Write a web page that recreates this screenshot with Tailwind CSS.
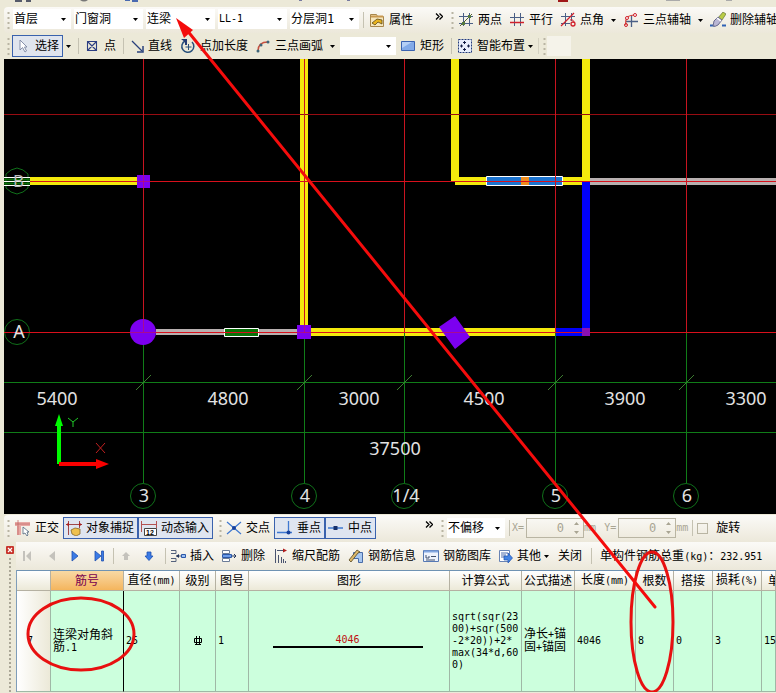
<!DOCTYPE html>
<html lang="zh-CN">
<head>
  <meta charset="UTF-8">
  <meta name="viewport" content="width=device-width, initial-scale=1.0">
  <title>连梁 - 钢筋编辑</title>
  <script src="https://cdn.jsdelivr.net/npm/@tailwindcss/browser@4"></script>
</head>
<body class="relative overflow-hidden bg-[#ece9d8] font-['DejaVu_Sans_Mono','Noto_Sans_CJK_SC',monospace] text-xs leading-3 text-black">

  <!-- Shared glyphs -->
  <svg class="hidden">
    <symbol id="caret" viewBox="0 0 7 5"><path d="M1 1h5L3.500 4z" fill="#000"/></symbol>
    <symbol id="grip" viewBox="0 0 3 18"><path d="M1.500 1v17" stroke="#b9b5a3" stroke-width="2" stroke-dasharray="2 3"/></symbol>
    <symbol id="more" viewBox="0 0 8 7"><path d="M1 .5l3 3-3 3M4.500 .5l3 3-3 3" fill="none" stroke="#000" stroke-width="1.300"/></symbol>
  </svg>

  <header>
    <svg class="block h-[7px] w-[776px]" viewBox="0 0 776 7">
      <path d="M15 0h7v2h-7zM26 0h5v2h-5z" fill="#555a6a"/><path d="M80 0q4 3 8 0z" fill="#777"/>
      <path d="M125 0h5v1h-5zM132 0h6v2h-6z" fill="#4a6ab0"/><path d="M299 0h3v1h-3zM347 0h3v1h-3z" fill="#777aa0"/>
      <path d="M558 0h10v2h-10z" fill="#a01818"/><path d="M666 0h14v1h-14zM726 0h6v1h-6z" fill="#aaa"/>
    </svg>

    <!-- Floor / component toolbar -->
    <div class="ml-1 flex h-[26px] items-center overflow-hidden rounded-l bg-linear-to-b from-[#fbfaf7] to-[#ece8da] pl-[3px] whitespace-nowrap *:shrink-0">
      <svg class="h-[18px] w-[3px]"><use href="#grip"/></svg>
      <div class="ml-[3px] flex gap-[3px] pb-[2px]">
        <label class="flex h-5 w-[58px] items-center bg-white pr-1"><select aria-label="楼层" class="h-5 min-w-0 flex-1 appearance-none pl-px leading-5 outline-none"><option>首层</option></select><svg class="h-[5px] w-[7px]"><use href="#caret"/></svg></label>
        <label class="flex h-5 w-[69px] items-center bg-white pr-1"><select aria-label="构件类别" class="h-5 min-w-0 flex-1 appearance-none pl-px leading-5 outline-none"><option>门窗洞</option></select><svg class="h-[5px] w-[7px]"><use href="#caret"/></svg></label>
        <label class="flex h-5 w-[69px] items-center bg-white pr-1"><select aria-label="构件类型" class="h-5 min-w-0 flex-1 appearance-none pl-px leading-5 outline-none"><option>连梁</option></select><svg class="h-[5px] w-[7px]"><use href="#caret"/></svg></label>
        <label class="flex h-5 w-[69px] items-center bg-white pr-1"><select aria-label="构件" class="h-5 min-w-0 flex-1 appearance-none pl-px text-[10px] leading-5 outline-none"><option>LL-1</option></select><svg class="h-[5px] w-[7px]"><use href="#caret"/></svg></label>
        <label class="flex h-5 w-[69px] items-center bg-white pr-1"><select aria-label="分层" class="h-5 min-w-0 flex-1 appearance-none pl-px leading-5 outline-none"><option>分层洞1</option></select><svg class="h-[5px] w-[7px]"><use href="#caret"/></svg></label>
      </div>
      <span class="ml-1 h-4 w-px bg-[#c5c2b2]"></span>
      <button class="ml-[5px] flex items-center gap-1">
        <svg class="size-4" viewBox="0 0 16 16"><path d="M1.500 2.500h6l1 2h6v10h-13z" fill="#f6e7bd" stroke="#a8874c"/><path d="M2 4.500h12" stroke="#c89850" stroke-width="2"/><path d="M3 11l5-4 5 1v4l-4-2-3 3z" fill="#e9b41e" stroke="#5c4818" stroke-width=".8"/></svg>属性
      </button>
      <button aria-label="更多" class="mb-2 ml-[22px]"><svg class="h-[7px] w-2"><use href="#more"/></svg></button>
      <svg class="ml-2 h-[18px] w-[3px]"><use href="#grip"/></svg>
      <button class="ml-1 flex items-center gap-1">
        <svg class="size-4" viewBox="0 0 16 16"><path d="M5.500 1v13M11.500 1v13M1 4.500h14M1 11.500h14" stroke="#4a5f86"/><path d="M2 14L14 2" stroke="#555f30"/><path d="M4 10h3v3H4zM10 3h3v3h-3z" fill="#567a3c"/></svg>两点
      </button>
      <button class="ml-[7px] flex items-center gap-1">
        <svg class="size-4" viewBox="0 0 16 16"><path d="M5.500 1v13M11.500 1v13" stroke="#4a5f86"/><path d="M1 5.500h14" stroke="#4a5f86"/><path d="M1 10.500h14" stroke="#d0202c" stroke-width="1.500"/></svg>平行
      </button>
      <button class="ml-[7px] flex items-center gap-1">
        <svg class="size-4" viewBox="0 0 16 16"><path d="M5.500 1v13M11.500 1v8M1 4.500h14M1 11.500h9" stroke="#4a5f86"/><path d="M1 14L14 1" stroke="#d0202c" stroke-width="1.300"/><path d="M10 8q4-1 4 3" fill="none" stroke="#d0202c"/><circle cx="13" cy="12" r="2" fill="none" stroke="#d0202c" stroke-width="1.300"/></svg>点角
      </button>
      <button aria-label="点角选项" class="ml-[6px]"><svg class="h-[5px] w-[7px]"><use href="#caret"/></svg></button>
      <button class="ml-[6px] flex items-center gap-1">
        <svg class="size-4" viewBox="0 0 16 16"><path d="M8.500 3v12M3 9.500h12" stroke="#4a5f86" stroke-width="1.300"/><path d="M3 13Q1 3 12 3" fill="none" stroke="#d94338" stroke-width="1.200"/><circle cx="3" cy="13" r="1.500" fill="none" stroke="#d0202c"/><circle cx="4" cy="6" r="1.500" fill="#fff" stroke="#d0202c"/><circle cx="12" cy="3" r="1.500" fill="#fff" stroke="#d0202c"/></svg>三点辅轴
      </button>
      <button aria-label="三点辅轴选项" class="ml-[6px]"><svg class="h-[5px] w-[7px]"><use href="#caret"/></svg></button>
      <button class="ml-[6px] flex items-center gap-1">
        <svg class="size-4" viewBox="0 0 16 16"><path d="M0 13.500h5M12 13.500h4" stroke="#2f62b5" stroke-width="2"/><path d="M8 6l5-6 3 2-4 6z" fill="#b9cc45" stroke="#63713a" stroke-width=".7"/><path d="M4 9l4-4 4 3-4 5q-3 2-5 1z" fill="#b9b6d4" stroke="#6a6a8c"/><path d="M7 6l4 3" stroke="#fff" stroke-width="1.500"/></svg>删除辅轴
      </button>
    </div>

    <!-- Drawing toolbar -->
    <div class="ml-1 flex h-[26px] items-center overflow-hidden pl-[3px] whitespace-nowrap *:shrink-0">
      <svg class="h-[18px] w-[3px]"><use href="#grip"/></svg>
      <button class="ml-[2px] flex h-[22px] w-[51px] items-center gap-1 border border-[#3a62ad] bg-[#e0e5ee] pl-[2px]">
        <svg class="size-4" viewBox="0 0 16 16"><path d="M5 2v10l2.500-2.500L10 14l1.500-1-2-4H12z" fill="#fff" stroke="#7a86a2" stroke-width=".9"/></svg>选择
      </button>
      <button aria-label="选择选项" class="ml-[2px]"><svg class="h-[5px] w-[7px]"><use href="#caret"/></svg></button>
      <span class="ml-[6px] h-4 w-px bg-[#c5c2b2]"></span>
      <button class="ml-[5px] flex items-center gap-1">
        <svg class="size-4" viewBox="0 0 16 16"><path d="M3.500 3.500h9v9h-9zM4 4l8 8M12 4l-8 8" fill="none" stroke="#2b3d82" stroke-width="1.100"/></svg>点
      </button>
      <span class="ml-[7px] h-4 w-px bg-[#c5c2b2]"></span>
      <button class="ml-1 flex items-center gap-1">
        <svg class="size-4" viewBox="0 0 16 16"><path d="M4 3l10 10" stroke="#28407c" stroke-width="1.300"/><path d="M15 8v6H9" fill="none" stroke="#28407c" stroke-width="1.500"/></svg>直线
      </button>
      <button class="ml-2 flex items-center gap-1">
        <svg class="size-4" viewBox="0 0 16 16"><path d="M5 3a6 6 0 1 0 7 1" fill="none" stroke="#28507c" stroke-width="1.500"/><path d="M1 1h6v6H5V4z" fill="#243c74"/><path d="M8.500 6v6M5.500 9h6" stroke="#28507c"/></svg>点加长度
      </button>
      <button class="ml-[7px] flex items-center gap-1">
        <svg class="size-4" viewBox="0 0 16 16"><path d="M3 13Q3 4 13 4" fill="none" stroke="#c8503e" stroke-width="1.400"/><circle cx="3" cy="13" r="1.500" fill="#3f6578"/><circle cx="6" cy="7" r="1.500" fill="#3f6578"/><circle cx="13" cy="4" r="1.500" fill="#3f6578"/></svg>三点画弧
      </button>
      <button aria-label="三点画弧选项" class="ml-[6px]"><svg class="h-[5px] w-[7px]"><use href="#caret"/></svg></button>
      <label class="ml-1 flex h-[18px] w-[56px] items-center bg-white pr-1"><select aria-label="画弧方式" class="min-w-0 flex-1 appearance-none outline-none"><option></option></select><svg class="h-[5px] w-[7px]"><use href="#caret"/></svg></label>
      <button class="ml-1 flex items-center gap-1">
        <svg class="size-4" viewBox="0 0 16 16"><path d="M1.500 3.500h13v9h-13z" fill="#82aae8" stroke="#3a62b0"/><path d="M2 4h10L2 10z" fill="#b4cff6"/></svg>矩形
      </button>
      <span class="ml-[7px] h-4 w-px bg-[#c5c2b2]"></span>
      <button class="ml-[5px] flex items-center gap-1">
        <svg class="size-4" viewBox="0 0 16 16"><path d="M1.500 1.500h13v13h-13z" fill="#e8eefc" stroke="#223a7c" stroke-dasharray="2 1"/><path d="M7.500 3v3M6 4.500h3M7.500 10v3M6 11.500h3M3 8h3M4.500 6.500v3M10 8h3M11.500 6.500v3" stroke="#111c44"/></svg>智能布置
      </button>
      <button aria-label="智能布置选项" class="ml-[2px]"><svg class="h-[5px] w-[7px]"><use href="#caret"/></svg></button>
      <span class="ml-1 h-4 w-px bg-[#d5d2c2]"></span>
      <svg class="ml-1 h-[18px] w-[3px]"><use href="#grip"/></svg>
      <span class="ml-px h-5 w-6 bg-[#f5f3ea]"></span>
    </div>
  </header>

  <!-- Drawing area -->
  <main class="ml-1 bg-black">
    <svg class="block w-full" viewBox="4 59 772 455" font-family="Noto Sans, sans-serif" font-size="18">
      <!-- walls -->
      <g fill="#f4ea0c">
        <path d="M300 59h8v270h-8zM451 59h8v122h-8zM582 59h8v122h-8z"/>
        <path d="M30 177h108v8H30zM455 177h131v8H455zM308 328h248v8H308z"/>
      </g>
      <path d="M590 178h186v7H590zM156 329h142v6H156z" fill="#b8b0b0"/>
      <path d="M582 182h8v153h-8zM555 328h28v8h-28z" fill="#0000fa"/>
      <!-- openings -->
      <path d="M486.500 176.500h76v9h-76z" fill="#1c74d0" stroke="#fff"/>
      <path d="M521 177h8v8h-8z" fill="#ee8c1c"/>
      <path d="M224.500 328.500h34v8h-34z" fill="#087008" stroke="#fff"/>
      <!-- axis bubbles -->
      <g fill="none" stroke="#10701a">
        <path d="M17 168l6 2 5 4v14l-5 4-6 2-6-2-5-4v-14l5-4z"/>
        <circle cx="17" cy="332" r="12.500"/>
        <circle cx="143" cy="496" r="12.500"/><circle cx="304" cy="496" r="12.500"/><circle cx="404" cy="496" r="12.500"/><circle cx="555" cy="496" r="12.500"/><circle cx="686" cy="496" r="12.500"/>
      </g>
      <path d="M4 179.500h26M4 183.500h26" stroke="#087008" stroke-width="2"/>
      <path d="M4 177.500h26M4 181.500h26M4 185.500h26" stroke="#fff"/>
      <text x="13" y="187" fill="#bbb" font-size="17">B</text>
      <!-- axes -->
      <path d="M4 114.500h772" stroke="#980c12"/>
      <path d="M143.500 59v273M304.500 59v273M404.500 59v273M555.500 59v273M686.500 59v273" stroke="#c81420"/>
      <path d="M4 382.500h772M4 432.500h772M143.500 332v151M304.500 332v151M404.500 332v151M555.500 332v151M686.500 332v151" stroke="#107c18"/>
      <path d="M136 390l15-15M297 390l15-15M397 390l15-15M548 390l15-15M679 390l15-15" stroke="#3c7c30"/>
      <path d="M30 181.500h746M4 332.500h772" stroke="#d8101c"/>
      <!-- columns -->
      <g fill="#7c00f0">
        <path d="M137 175h13v13h-13zM297 325h14v14h-14zM455 316l15 21-15 12-16-22z"/>
        <circle cx="143" cy="332" r="13"/>
        <path d="M582 328h8v8h-8z" fill="#8c10b4"/>
      </g>
      <path d="M137 181.500h13M143.500 175v13M130 332.500h26M143.500 319v13M297 332.500h14M304.500 325v8M439 332.500h31" stroke="#c81450" stroke-opacity=".6"/>
      <!-- dimensions -->
      <g fill="#e2e2e2" text-anchor="middle">
        <text x="57" y="405">5400</text><text x="228" y="405">4800</text><text x="359" y="405">3000</text>
        <text x="484" y="405">4500</text><text x="625" y="405">3900</text><text x="746" y="405">3300</text>
        <text x="395" y="455">37500</text>
        <text x="144" y="502">3</text><text x="305" y="502">4</text><text x="406" y="502">1/4</text><text x="556" y="502">5</text><text x="687" y="502">6</text>
        <text x="19" y="338">A</text>
      </g>
      <!-- UCS -->
      <path d="M57 464v-38h-2l4-12 4 12h-2v38z" fill="#00fa00"/>
      <path d="M59 462h37v-3l13 5-13 5v-3H59z" fill="#fa0000"/>
      <path d="M68 418l5 4 5-4M73 422v5" fill="none" stroke="#20c828"/>
      <path d="M96 443l9 10M105 443l-9 10" stroke="#c02020"/>
    </svg>
  </main>

  <!-- Snap toolbar -->
  <div class="mt-px ml-1 flex h-[27px] items-center overflow-hidden rounded-l bg-linear-to-b from-[#fbfaf7] to-[#ece8da] pb-px pl-[3px] whitespace-nowrap *:shrink-0">
    <svg class="h-[18px] w-[3px]"><use href="#grip"/></svg>
    <button class="ml-[5px] flex items-center gap-1">
      <svg class="size-4" viewBox="0 0 16 16"><path d="M0 2h15v4H6v9H2V6H0z" fill="#e8a9a4"/><path d="M3 0v15M0 4h15" stroke="#c06868" stroke-width=".8"/><path d="M8 7v7l2-1 2 3 1-1-1-3h2z" fill="#fff" stroke="#51677d" stroke-width=".8"/></svg>正交
    </button>
    <button class="ml-1 flex h-[22px] w-[75px] items-center gap-1 border border-[#3a62ad] bg-[#dfe5f0] pl-[2px]">
      <svg class="size-4" viewBox="0 0 16 16"><path d="M2.500 1v14M13.500 1v7M0 4.500h16" stroke="#a04848"/><path d="M0 4.500l3-2v4zM16 4.500l-3-2v4z" fill="#a82020"/><path d="M5 10l4-2 5 1v5l-4 2-4-2z" fill="#efc14e" stroke="#86682a" stroke-width=".8"/></svg>对象捕捉
    </button>
    <button class="flex h-[22px] w-[75px] items-center gap-1 border border-[#3a62ad] bg-[#dfe5f0] pl-[2px]">
      <svg class="size-4" viewBox="0 0 16 16"><path d="M.5 1v11M15.500 1v7M1 4.500h14" fill="none" stroke="#b45252"/><path d="M3.500 8.500h12v7h-12z" fill="#fff" stroke="#444"/><text x="5" y="14.500" font-family="Liberation Sans, sans-serif" font-size="7" font-weight="bold">12</text></svg>动态输入
    </button>
    <svg class="ml-[6px] h-[18px] w-[3px]"><use href="#grip"/></svg>
    <button class="ml-1 flex items-center gap-1">
      <svg class="size-4" viewBox="0 0 16 16"><path d="M1 2l14 12M15 2L1 14" stroke="#3f78d0" stroke-width="1.200"/><circle cx="8" cy="8" r="2" fill="#16409c"/></svg>交点
    </button>
    <button class="ml-1 flex h-[22px] w-[51px] items-center gap-1 border border-[#3a62ad] bg-[#dfe5f0] pl-[2px]">
      <svg class="size-4" viewBox="0 0 16 16"><path d="M11.500 1v12M0 12.500h15" stroke="#3f78d0" stroke-width="1.300"/><circle cx="11.500" cy="12.500" r="2" fill="#16409c"/></svg>垂点
    </button>
    <button class="flex h-[22px] w-[51px] items-center gap-1 border border-[#3a62ad] bg-[#dfe5f0] pl-[2px]">
      <svg class="size-4" viewBox="0 0 16 16"><path d="M0 8h15" stroke="#3f78d0" stroke-width="1.300"/><path d="M5.500 6h4v4h-4z" fill="#16306c"/></svg>中点
    </button>
    <button aria-label="更多" class="mb-2 ml-[49px]"><svg class="h-[7px] w-2"><use href="#more"/></svg></button>
    <svg class="ml-2 h-[18px] w-[3px]"><use href="#grip"/></svg>
    <label class="ml-[3px] flex h-5 w-[58px] items-center bg-white pr-1"><select aria-label="偏移" class="h-5 min-w-0 flex-1 appearance-none pl-px leading-5 outline-none"><option>不偏移</option></select><svg class="h-[5px] w-[7px]"><use href="#caret"/></svg></label>
    <span class="ml-1 h-4 w-px bg-[#c5c2b2]"></span>
    <label for="dx" class="ml-[2px] text-[10px] text-[#a9a593]">X=</label>
    <span class="ml-[2px] flex h-5 w-[58px] items-center border border-[#b9b5a3] pr-1">
      <input id="dx" type="text" value="0" disabled class="min-w-0 flex-1 pr-[10px] text-right text-[#a9a593]">
      <svg class="h-3 w-[5px]" viewBox="0 0 5 12"><path d="M0 3h5L2.500 0zM0 9h5l-2.500 3z" fill="#a9a593"/></svg>
    </span>
    <span class="text-[10px] text-[#a9a593]">mm</span>
    <label for="dy" class="ml-2 text-[10px] text-[#a9a593]">Y=</label>
    <span class="ml-[2px] flex h-5 w-[58px] items-center border border-[#b9b5a3] pr-1">
      <input id="dy" type="text" value="0" disabled class="min-w-0 flex-1 pr-[10px] text-right text-[#a9a593]">
      <svg class="h-3 w-[5px]" viewBox="0 0 5 12"><path d="M0 3h5L2.500 0zM0 9h5l-2.500 3z" fill="#a9a593"/></svg>
    </span>
    <span class="text-[10px] text-[#a9a593]">mm</span>
    <span class="ml-1 h-4 w-px bg-[#c5c2b2]"></span>
    <label class="ml-1 flex items-center gap-2"><input type="checkbox" class="size-[11px] appearance-none border border-[#b9b5a3]">旋转</label>
  </div>

  <!-- Rebar panel -->
  <section class="flex">
    <aside class="flex w-4 shrink-0 flex-col items-start pt-1 pl-[6px]">
      <button aria-label="关闭面板"><svg class="block size-2" viewBox="0 0 8 8"><rect width="8" height="8" rx="1" fill="#c8342c"/><path d="M2 2l4 4M6 2L2 6" stroke="#fff" stroke-width="1.200"/></svg></button>
      <span class="mt-1 ml-[3px] w-0 flex-1 border-l-2 border-dotted border-[#aaa696]"></span>
    </aside>
    <div class="min-w-0 flex-1">
      <div class="flex h-[28px] items-center overflow-hidden bg-linear-to-b from-[#fbfaf7] to-[#ece8da] pl-[3px] whitespace-nowrap *:shrink-0">
        <button aria-label="首条"><svg class="block size-4" viewBox="0 0 16 16"><path d="M4 3h2v10H4zM12 3v10L7 8z" fill="#c4c2bc"/></svg></button>
        <button aria-label="上一条" class="ml-[9px]"><svg class="block size-4" viewBox="0 0 16 16"><path d="M11 3v10L5 8z" fill="#c4c2bc"/></svg></button>
        <button aria-label="下一条" class="ml-[7px]"><svg class="block size-4" viewBox="0 0 16 16"><path d="M5 3v10l6-5z" fill="#3b7be6" stroke="#1e50b0" stroke-width=".8"/></svg></button>
        <button aria-label="末条" class="ml-2"><svg class="block size-4" viewBox="0 0 16 16"><path d="M4 3v10l6-5zM10.500 3h2v10h-2z" fill="#3b7be6" stroke="#1e50b0" stroke-width=".8"/></svg></button>
        <span class="ml-[6px] h-4 w-px bg-[#c5c2b2]"></span>
        <button aria-label="上移" class="ml-1"><svg class="block size-4" viewBox="0 0 16 16"><path d="M8 4l4 4h-2v4H6V8H4z" fill="#c4c2bc"/></svg></button>
        <button aria-label="下移" class="ml-[7px]"><svg class="block size-4" viewBox="0 0 16 16"><path d="M8 12.500L4 8h2V4h4v4h2z" fill="#3b7be6" stroke="#1e50b0" stroke-width=".8"/></svg></button>
        <span class="ml-2 h-4 w-px bg-[#c5c2b2]"></span>
        <button class="ml-1 flex items-center gap-1">
          <svg class="size-4" viewBox="0 0 16 16"><path d="M1 2.500h5v3H1M1 10.500h5v3H1M6 8h6" fill="none" stroke="#54627c"/><path d="M9 6L6 8l3 2z" fill="#24365c"/><path d="M11.500 6.500h4v3h-4z" fill="#9cc0f4" stroke="#2c58a8"/></svg>插入
        </button>
        <button class="ml-[7px] flex items-center gap-1">
          <svg class="size-4" viewBox="0 0 16 16"><path d="M1.500 2.500h7v3h-7zM1.500 10.500h7v3h-7z" fill="#fff" stroke="#6b7c98"/><path d="M1.500 6.500h9v3h-9z" fill="#6c9ce8" stroke="#2c58a8"/><path d="M11 8h4M13 6l2 2-2 2" fill="none" stroke="#24365c"/></svg>删除
        </button>
        <button class="ml-[7px] flex items-center gap-1">
          <svg class="size-4" viewBox="0 0 16 16"><path d="M3.500 1v14M5 2.500h9M6.500 7v8M9.500 9v6M11.500 11v4M13.500 13v2" stroke="#4a5470"/><path d="M15 2.500l-4-2v4z" fill="#b01c1c"/></svg>缩尺配筋
        </button>
        <button class="ml-2 flex items-center gap-1">
          <svg class="size-4" viewBox="0 0 16 16"><path d="M5.500 4.500h9v10h-4v-4h-5z" fill="#a7c7f0" stroke="#496ca8"/><path d="M1 12L9 2l3 2-2 1-7 9z" fill="#dcb86a" stroke="#554620" stroke-width=".8"/></svg>钢筋信息
        </button>
        <button class="ml-[7px] flex items-center gap-1">
          <svg class="size-4" viewBox="0 0 16 16"><path d="M.5 2.500h15v11H.5z" fill="#eef3fd" stroke="#5679b4"/><path d="M1 3.500h14" stroke="#83a7e0" stroke-width="2"/><path d="M3 7v3h3V8M8 8.500h5M3 12h9" fill="none" stroke="#40506c"/></svg>钢筋图库
        </button>
        <button class="ml-[6px] flex items-center gap-1">
          <svg class="size-4" viewBox="0 0 16 16"><path d="M2.500 2.500h10v11h-10z" fill="#fff" stroke="#6883b4"/><path d="M4 5h7M4 7h5M4 9h3" stroke="#4e6cab"/><path d="M7 8h4V5l4.500 5-4.500 5v-3H7z" fill="#4484e4" stroke="#1e50b0" stroke-width=".7"/></svg>其他
        </button>
        <button aria-label="其他选项" class="ml-[2px]"><svg class="h-[5px] w-[7px]"><use href="#caret"/></svg></button>
        <button class="ml-2">关闭</button>
        <span class="ml-[9px] h-4 w-px bg-[#c5c2b2]"></span>
        <span class="ml-2">单构件钢筋总重<span class="text-[10px]">(kg)</span>：<span class="text-[10px]">232.951</span></span>
      </div>

      <div class="overflow-hidden border-l border-[#7f9db9]">
        <table class="w-full table-fixed border-separate border-spacing-0 border-t border-[#6f93b3] [&_td]:border-r [&_td]:border-b [&_td]:border-[#9fb8a6] [&_td]:bg-[#ccffdd] [&_td]:px-[2px] [&_th]:overflow-hidden [&_th]:border-r [&_th]:border-b [&_th]:border-[#b5b1a2] [&_th]:bg-linear-to-b [&_th]:from-white [&_th]:to-[#ece9d8] [&_th]:font-normal [&_th]:whitespace-nowrap">
          <colgroup>
            <col class="w-[34px]"><col class="w-[73px]"><col class="w-[56px]"><col class="w-[36px]"><col class="w-[33px]"><col class="w-[201px]"><col class="w-[72px]"><col class="w-[53px]"><col class="w-[61px]"><col class="w-[38px]"><col class="w-[39px]"><col class="w-[49px]"><col>
          </colgroup>
          <thead>
            <tr class="h-5">
              <th></th>
              <th class="from-[#f8d9a4]! to-[#f4b55c]! text-[#780050]">筋号</th>
              <th>直径<span class="text-[10px]">(mm)</span></th>
              <th>级别</th>
              <th>图号</th>
              <th>图形</th>
              <th>计算公式</th>
              <th>公式描述</th>
              <th>长度<span class="text-[10px]">(mm)</span></th>
              <th>根数</th>
              <th>搭接</th>
              <th>损耗<span class="text-[10px]">(%)</span></th>
              <th class="pl-[6px] text-left">单重</th>
            </tr>
          </thead>
          <tbody>
            <tr class="h-[101px]">
              <td class="bg-linear-to-r from-white to-[#ece9d8] pl-[10px]! text-[10px]">7</td>
              <td class="border-r-black!">连梁对角斜筋<span class="text-[10px]">.1</span></td>
              <td class="text-[10px]">25</td>
              <td><svg aria-label="三级钢" class="mx-auto h-[10px] w-[10px]" viewBox="0 0 10 10"><path d="M3.500 0v8M6.500 0v8M1.500 2.500h7v4h-7zM2 8.500h6" fill="none" stroke="#000"/></svg></td>
              <td class="text-[10px]">1</td>
              <td class="pr-[5px]! text-center text-[10px] text-[#c01010]">4046<div class="mx-auto h-[2px] w-[150px] bg-black"></div></td>
              <td class="text-[10px]">sqrt(sqr(23<br>00)+sqr(500<br>-2*20))+2*<br>max(34*d,60<br>0)</td>
              <td>净长<span class="text-[10px]">+</span>锚<br>固<span class="text-[10px]">+</span>锚固</td>
              <td class="text-[10px]">4046</td>
              <td class="text-[10px]">8</td>
              <td class="text-[10px]">0</td>
              <td class="text-[10px]">3</td>
              <td class="text-[10px]">15</td>
            </tr>
          </tbody>
        </table>
      </div>
    </div>
  </section>

  <!-- Annotations over the window -->
  <svg class="pointer-events-none absolute top-0 left-0 h-[693px] w-[776px]" viewBox="0 0 776 693">
    <g fill="none" stroke="#e81010" stroke-width="3">
      <ellipse cx="81" cy="634" rx="53" ry="36"/>
      <ellipse cx="652" cy="622" rx="21" ry="70"/>
      <path d="M655 607L186 29" stroke="#f40c0c" stroke-linecap="round"/>
    </g>
    <path d="M176 18l17 12-9 8z" fill="#f40c0c"/>
  </svg>
</body>
</html>
